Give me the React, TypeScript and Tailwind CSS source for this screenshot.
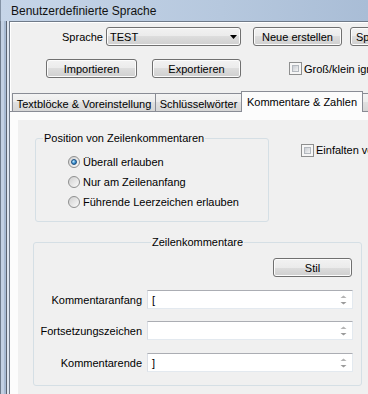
import React from "react";

const btn =
  "flex items-center justify-center shrink-0 whitespace-nowrap rounded-[3px] border border-[#707070] bg-[linear-gradient(#f2f2f2_0%,#ebebeb_50%,#dddddd_50%,#cfcfcf_100%)] shadow-[inset_0_0_0_1px_#fcfcfc] text-[11px] text-black";

const tabIdle =
  "h-[18px] -ml-px shrink-0 flex items-center justify-center pt-[2px] whitespace-nowrap border border-b-0 border-[#898c95] bg-[linear-gradient(#f4f4f4_0%,#ececec_50%,#e0e0e0_50%,#d6d6d6_100%)]";

function Checkbox() {
  return (
    <div className="w-[13px] h-[13px] shrink-0 border border-[#8e8f8f] bg-[#f6f6f6] p-[2px]">
      <div className="w-full h-full border border-[#b3b8be] bg-[linear-gradient(135deg,#c9cdd3,#f4f4f4)]" />
    </div>
  );
}

function Radio({ label, checked, h }: { label: string; checked?: boolean; h: string }) {
  return (
    <div className={`flex items-center ${h}`}>
      <div className="w-[12px] h-[12px] shrink-0 rounded-full border border-[#8e8f8f] bg-[linear-gradient(135deg,#cfcfcf,#fbfbfb)] flex items-center justify-center">
        {checked && (
          <div className="w-[6px] h-[6px] rounded-full border border-[#1c4f80] bg-[radial-gradient(circle_at_35%_35%,#bfe8ff,#3189cb_60%,#1b5d96)]" />
        )}
      </div>
      <span className="ml-[3px] whitespace-nowrap">{label}</span>
    </div>
  );
}

function Spinner() {
  return (
    <svg width="7" height="10" viewBox="0 0 7 10" className="shrink-0 mr-[5px]">
      <path d="M0.5 3h6L3.5 0.5z" fill="#b4b4b4" />
      <path d="M0.5 7h6L3.5 9.5z" fill="#9a9a9a" />
    </svg>
  );
}

function Field({ label, value, mt }: { label: string; value: string; mt: string }) {
  return (
    <div className={`flex items-center ${mt}`}>
      <div className="w-[108px] text-right whitespace-nowrap">{label}</div>
      <div className="ml-[5px] w-[206px] h-[19px] shrink-0 flex items-center justify-between bg-white border border-[#dbdfe6] border-t-[#abadb3] border-r-[#e3e9ef] border-b-[#e3e9ef] pl-[4px]">
        <span>{value}</span>
        <Spinner />
      </div>
    </div>
  );
}

export default function App() {
  return (
    <div className="w-[368px] h-[394px] overflow-hidden flex flex-col bg-[#f0f0f0] text-black text-[11px] leading-[14px] font-['Liberation_Sans',Arial,sans-serif]">
      {/* Title bar */}
      <div className="h-[21px] shrink-0 flex items-center pl-[10px] border-l border-[#8493a6] bg-[linear-gradient(to_right,#c6d5e8,#b6c8de_60%,#a9bdd6)] text-[12px] text-[#111]">
        Benutzerdefinierte Sprache
      </div>

      <div className="flex flex-1 min-h-0">
        {/* Window frame */}
        <div className="w-[9px] shrink-0 bg-[linear-gradient(to_right,#6e7b8b_0px,#6e7b8b_1px,#c3d1e3_1px,#c3d1e3_4px,#a7bad2_4px,#a7bad2_6px,#5a6370_6px,#5a6370_7px,#dde5ef_7px,#dde5ef_9px)]" />

        {/* Client */}
        <div className="flex-1 min-w-0 flex flex-col border-t border-l border-[#6f7a89] shadow-[inset_1px_1px_0_#ffffff]">
          {/* Row 1 */}
          <div className="mt-[5px] h-[19px] shrink-0 flex items-center">
            <div className="w-[96px] shrink-0 text-right pr-[3px]">Sprache</div>
            <div className="w-[135px] h-[19px] shrink-0 flex items-center justify-between rounded-[3px] border border-[#707070] bg-[linear-gradient(#f2f2f2_0%,#ebebeb_50%,#dddddd_50%,#cfcfcf_100%)] shadow-[inset_0_0_0_1px_#fcfcfc] pl-[3px] pr-[3px]">
              <span>TEST</span>
              <svg width="7" height="4" viewBox="0 0 7 4">
                <path d="M0 0h7L3.5 4z" fill="#000" />
              </svg>
            </div>
            <button className={`${btn} ml-[12px] w-[89px] h-[19px]`}>Neue erstellen</button>
            <button className={`${btn} ml-[8px] w-[110px] h-[19px] justify-start pl-[5px]`}>Speichern unter...</button>
          </div>

          {/* Row 2 */}
          <div className="mt-[13px] h-[19px] shrink-0 flex items-center">
            <button className={`${btn} ml-[36px] w-[91px] h-[19px]`}>Importieren</button>
            <button className={`${btn} ml-[15px] w-[89px] h-[19px]`}>Exportieren</button>
            <div className="ml-[48px] flex items-center shrink-0 whitespace-nowrap">
              <Checkbox />
              <span className="ml-[2px]">Groß/klein ignorieren</span>
            </div>
          </div>

          {/* Tabs */}
          <div className="mt-[13px] h-[20px] shrink-0 flex items-end pl-[3px]">
            <div className={`${tabIdle} w-[144px]`}>Textblöcke &amp; Voreinstellung</div>
            <div className={`${tabIdle} w-[87px]`}>Schlüsselwörter</div>
            <div className="relative z-10 -ml-px -mb-px w-[122px] h-[21px] shrink-0 flex items-center justify-center pb-[1px] whitespace-nowrap border border-b-0 border-[#898c95] bg-[#fcfcfc]">
              Kommentare &amp; Zahlen
            </div>
            <div className={`${tabIdle} w-[80px]`} />
          </div>

          {/* Tab panel */}
          <div className="flex-1 min-h-0 flex flex-col bg-[#fcfcfc] border-t border-[#898c95] pl-[8px] pt-[8px]">
            <div className="flex-1 bg-[#f0f0f0] flex flex-col">
              <div className="flex items-start">
                <fieldset className="ml-[17px] mt-[11px] w-[234px] h-[91px] shrink-0 border border-[#d5dfe5] rounded-[3px]">
                  <legend className="ml-[7px] px-[1px] leading-[14px]">Position von Zeilenkommentaren</legend>
                  <div className="pl-[32px] pt-[7px]">
                    <Radio label="Überall erlauben" checked h="h-[20px]" />
                    <Radio label="Nur am Zeilenanfang" h="h-[20px]" />
                    <Radio label="Führende Leerzeichen erlauben" h="h-[19px]" />
                  </div>
                </fieldset>
                <div className="ml-[32px] mt-[23px] flex items-center shrink-0 whitespace-nowrap">
                  <Checkbox />
                  <span className="ml-[2px]">Einfalten von Kommentaren</span>
                </div>
              </div>

              <fieldset className="ml-[15px] mt-[13px] w-[329px] h-[151px] shrink-0 border border-[#d5dfe5] rounded-[3px]">
                <legend className="mx-auto px-[1px] leading-[14px]">Zeilenkommentare</legend>
                <div className="flex justify-end pr-[9px] pt-[9px]">
                  <button className={`${btn} w-[79px] h-[19px] border-[#3c7fb1] shadow-[inset_0_0_0_1px_#c4e5f6]`}>Stil</button>
                </div>
                <div className="mt-[13px] flex flex-col">
                  <Field label="Kommentaranfang" value="[" mt="" />
                  <Field label="Fortsetzungszeichen" value="" mt="mt-[12px]" />
                  <Field label="Kommentarende" value="]" mt="mt-[13px]" />
                </div>
              </fieldset>
            </div>
          </div>
        </div>
      </div>
    </div>
  );
}
